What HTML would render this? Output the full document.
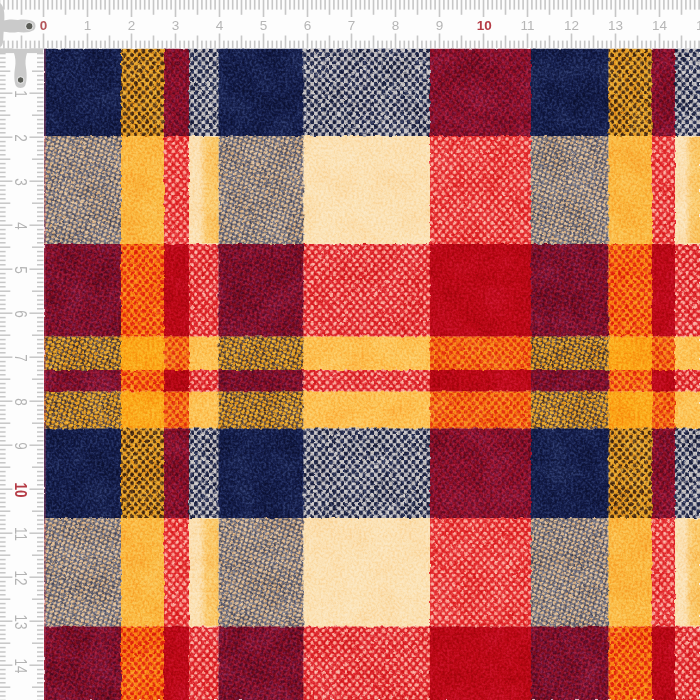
<!DOCTYPE html>
<html><head><meta charset="utf-8"><title>Plaid fabric</title>
<style>
html,body{margin:0;padding:0;background:#fff;}
body{width:700px;height:700px;overflow:hidden;font-family:"Liberation Sans",sans-serif;}
svg{display:block;font-family:"Liberation Sans",sans-serif;}
</style></head><body>
<svg width="700" height="700" viewBox="0 0 700 700">
<defs>
<pattern id="pYN" x="44.0" y="48.5" width="7.5" height="8.4" patternUnits="userSpaceOnUse"><rect width="7.5" height="8.4" fill="#e8a326"/><rect x="0.02499999999999991" y="0.10000000000000009" width="3.7" height="4.0" rx="1.5" fill="#4c2c12"/><rect x="3.775" y="4.300000000000001" width="3.7" height="4.0" rx="1.5" fill="#4c2c12"/></pattern>
<pattern id="pRN" x="44.0" y="48.5" width="7.5" height="8.4" patternUnits="userSpaceOnUse"><rect width="7.5" height="8.4" fill="#981028"/><rect x="-0.07499999999999996" y="-0.04999999999999982" width="3.9" height="4.3" rx="1.5" fill="#72102e"/><rect x="3.675" y="4.15" width="3.9" height="4.3" rx="1.5" fill="#72102e"/></pattern>
<pattern id="pCN" x="44.0" y="48.5" width="7.5" height="8.4" patternUnits="userSpaceOnUse"><rect width="7.5" height="8.4" fill="#c8c4c4"/><rect x="-0.20000000000000018" y="-0.19999999999999973" width="4.15" height="4.6" rx="1.5" fill="#20274a"/><rect x="3.55" y="4.000000000000001" width="4.15" height="4.6" rx="1.5" fill="#20274a"/></pattern>
<pattern id="pNC" width="7.5" height="8.4" patternUnits="userSpaceOnUse" patternTransform="rotate(-25) scale(0.8)"><rect width="7.5" height="8.4" fill="#5f6174"/><ellipse cx="1.875" cy="2.1" rx="2.9" ry="1.7" fill="#e0bc92"/><ellipse cx="5.625" cy="6.300000000000001" rx="2.9" ry="1.7" fill="#e0bc92"/></pattern>
<pattern id="pRC" x="44.0" y="48.5" width="7.5" height="8.4" patternUnits="userSpaceOnUse"><rect width="7.5" height="8.4" fill="#e3282b"/><rect x="0.2250000000000001" y="0.25" width="3.3" height="3.7" rx="1.5" fill="#fbaa9c"/><rect x="3.975" y="4.450000000000001" width="3.3" height="3.7" rx="1.5" fill="#fbaa9c"/></pattern>
<pattern id="pNR" width="7.5" height="8.4" patternUnits="userSpaceOnUse" patternTransform="rotate(-25) scale(1)"><rect width="7.5" height="8.4" fill="#8c0f26"/><ellipse cx="1.875" cy="2.1" rx="2.9" ry="1.7" fill="#681030"/><ellipse cx="5.625" cy="6.300000000000001" rx="2.9" ry="1.7" fill="#681030"/></pattern>
<pattern id="pYR" x="44.0" y="48.5" width="7.5" height="8.4" patternUnits="userSpaceOnUse"><rect width="7.5" height="8.4" fill="#fa8814"/><rect x="-0.07499999999999996" y="-0.04999999999999982" width="3.9" height="4.3" rx="1.5" fill="#e62a0f"/><rect x="3.675" y="4.15" width="3.9" height="4.3" rx="1.5" fill="#e62a0f"/></pattern>
<pattern id="pCR" x="44.0" y="48.5" width="7.5" height="8.4" patternUnits="userSpaceOnUse"><rect width="7.5" height="8.4" fill="#de2228"/><rect x="0.2250000000000001" y="0.25" width="3.3" height="3.7" rx="1.5" fill="#fbac9e"/><rect x="3.975" y="4.450000000000001" width="3.3" height="3.7" rx="1.5" fill="#fbac9e"/></pattern>
<pattern id="pNY" width="7.5" height="8.4" patternUnits="userSpaceOnUse" patternTransform="rotate(-25) scale(0.8)"><rect width="7.5" height="8.4" fill="#54403a"/><ellipse cx="1.875" cy="2.1" rx="3.3" ry="1.95" fill="#eba624"/><ellipse cx="5.625" cy="6.300000000000001" rx="3.3" ry="1.95" fill="#eba624"/></pattern>
<pattern id="pRY" x="44.0" y="48.5" width="7.5" height="8.4" patternUnits="userSpaceOnUse"><rect width="7.5" height="8.4" fill="#f88616"/><rect x="-0.07499999999999996" y="-0.04999999999999982" width="3.9" height="4.3" rx="1.5" fill="#e63610"/><rect x="3.675" y="4.15" width="3.9" height="4.3" rx="1.5" fill="#e63610"/></pattern>
<linearGradient id="yg" x1="0" x2="1" y1="0" y2="0"><stop offset="0" stop-color="#fac45a" stop-opacity="0"/><stop offset="0.4" stop-color="#fac45a" stop-opacity="0.75"/><stop offset="1" stop-color="#fac45a" stop-opacity="0.9"/></linearGradient>
<filter id="grain" x="0" y="0" width="100%" height="100%" color-interpolation-filters="sRGB">
<feTurbulence type="fractalNoise" baseFrequency="0.42" numOctaves="2" seed="3"/>
<feColorMatrix type="matrix" values="2.2 0 0 0 -0.6  2.2 0 0 0 -0.6  2.2 0 0 0 -0.6  0 0 0 0 1"/>
</filter>
<filter id="mott" x="0" y="0" width="100%" height="100%" color-interpolation-filters="sRGB">
<feTurbulence type="fractalNoise" baseFrequency="0.035" numOctaves="2" seed="7"/>
<feColorMatrix type="matrix" values="1.6 0 0 0 -0.3  1.6 0 0 0 -0.3  1.6 0 0 0 -0.3  0 0 0 0 1"/>
</filter>
<filter id="soft" x="0" y="0" width="100%" height="100%" color-interpolation-filters="sRGB">
<feTurbulence type="fractalNoise" baseFrequency="0.16" numOctaves="2" seed="5" result="t"/>
<feDisplacementMap in="SourceGraphic" in2="t" scale="3.2" xChannelSelector="R" yChannelSelector="G" result="d"/>
<feGaussianBlur in="d" stdDeviation="0.55"/>
</filter>
</defs>
<rect width="700" height="700" fill="#fdfdfd"/>
<g filter="url(#soft)">
<rect x="44" y="48.5" width="77.3" height="87.8" fill="#151e4c"/>
<rect x="121" y="48.5" width="43.3" height="87.8" fill="url(#pYN)"/>
<rect x="164" y="48.5" width="25.3" height="87.8" fill="url(#pRN)"/>
<rect x="189" y="48.5" width="29.8" height="87.8" fill="url(#pCN)"/>
<rect x="218.5" y="48.5" width="85.3" height="87.8" fill="#151e4c"/>
<rect x="303.5" y="48.5" width="126.8" height="87.8" fill="url(#pCN)"/>
<rect x="430" y="48.5" width="101.3" height="87.8" fill="url(#pRN)"/>
<rect x="531" y="48.5" width="77.8" height="87.8" fill="#151e4c"/>
<rect x="608.5" y="48.5" width="43.8" height="87.8" fill="url(#pYN)"/>
<rect x="652" y="48.5" width="23.3" height="87.8" fill="url(#pRN)"/>
<rect x="675" y="48.5" width="25.3" height="87.8" fill="url(#pCN)"/>
<rect x="44" y="136" width="77.3" height="108.3" fill="url(#pNC)"/>
<rect x="121" y="136" width="43.3" height="108.3" fill="#fab940"/>
<rect x="164" y="136" width="25.3" height="108.3" fill="url(#pRC)"/>
<rect x="189" y="136" width="29.8" height="108.3" fill="#fbe1b3"/>
<rect x="218.5" y="136" width="85.3" height="108.3" fill="url(#pNC)"/>
<rect x="303.5" y="136" width="126.8" height="108.3" fill="#fbe1b3"/>
<rect x="430" y="136" width="101.3" height="108.3" fill="url(#pRC)"/>
<rect x="531" y="136" width="77.8" height="108.3" fill="url(#pNC)"/>
<rect x="608.5" y="136" width="43.8" height="108.3" fill="#fab940"/>
<rect x="652" y="136" width="23.3" height="108.3" fill="url(#pRC)"/>
<rect x="675" y="136" width="25.3" height="108.3" fill="#fbe1b3"/>
<rect x="44" y="244" width="77.3" height="92.8" fill="url(#pNR)"/>
<rect x="121" y="244" width="43.3" height="92.8" fill="url(#pYR)"/>
<rect x="164" y="244" width="25.3" height="92.8" fill="#bc0815"/>
<rect x="189" y="244" width="29.8" height="92.8" fill="url(#pCR)"/>
<rect x="218.5" y="244" width="85.3" height="92.8" fill="url(#pNR)"/>
<rect x="303.5" y="244" width="126.8" height="92.8" fill="url(#pCR)"/>
<rect x="430" y="244" width="101.3" height="92.8" fill="#bc0815"/>
<rect x="531" y="244" width="77.8" height="92.8" fill="url(#pNR)"/>
<rect x="608.5" y="244" width="43.8" height="92.8" fill="url(#pYR)"/>
<rect x="652" y="244" width="23.3" height="92.8" fill="#bc0815"/>
<rect x="675" y="244" width="25.3" height="92.8" fill="url(#pCR)"/>
<rect x="44" y="336.5" width="77.3" height="33.8" fill="url(#pNY)"/>
<rect x="121" y="336.5" width="43.3" height="33.8" fill="#fba818"/>
<rect x="164" y="336.5" width="25.3" height="33.8" fill="url(#pRY)"/>
<rect x="189" y="336.5" width="29.8" height="33.8" fill="#fcc252"/>
<rect x="218.5" y="336.5" width="85.3" height="33.8" fill="url(#pNY)"/>
<rect x="303.5" y="336.5" width="126.8" height="33.8" fill="#fcc252"/>
<rect x="430" y="336.5" width="101.3" height="33.8" fill="url(#pRY)"/>
<rect x="531" y="336.5" width="77.8" height="33.8" fill="url(#pNY)"/>
<rect x="608.5" y="336.5" width="43.8" height="33.8" fill="#fba818"/>
<rect x="652" y="336.5" width="23.3" height="33.8" fill="url(#pRY)"/>
<rect x="675" y="336.5" width="25.3" height="33.8" fill="#fcc252"/>
<rect x="44" y="370" width="77.3" height="21.8" fill="url(#pNR)"/>
<rect x="121" y="370" width="43.3" height="21.8" fill="url(#pYR)"/>
<rect x="164" y="370" width="25.3" height="21.8" fill="#bc0815"/>
<rect x="189" y="370" width="29.8" height="21.8" fill="url(#pCR)"/>
<rect x="218.5" y="370" width="85.3" height="21.8" fill="url(#pNR)"/>
<rect x="303.5" y="370" width="126.8" height="21.8" fill="url(#pCR)"/>
<rect x="430" y="370" width="101.3" height="21.8" fill="#bc0815"/>
<rect x="531" y="370" width="77.8" height="21.8" fill="url(#pNR)"/>
<rect x="608.5" y="370" width="43.8" height="21.8" fill="url(#pYR)"/>
<rect x="652" y="370" width="23.3" height="21.8" fill="#bc0815"/>
<rect x="675" y="370" width="25.3" height="21.8" fill="url(#pCR)"/>
<rect x="44" y="391.5" width="77.3" height="37.3" fill="url(#pNY)"/>
<rect x="121" y="391.5" width="43.3" height="37.3" fill="#fba818"/>
<rect x="164" y="391.5" width="25.3" height="37.3" fill="url(#pRY)"/>
<rect x="189" y="391.5" width="29.8" height="37.3" fill="#fcc252"/>
<rect x="218.5" y="391.5" width="85.3" height="37.3" fill="url(#pNY)"/>
<rect x="303.5" y="391.5" width="126.8" height="37.3" fill="#fcc252"/>
<rect x="430" y="391.5" width="101.3" height="37.3" fill="url(#pRY)"/>
<rect x="531" y="391.5" width="77.8" height="37.3" fill="url(#pNY)"/>
<rect x="608.5" y="391.5" width="43.8" height="37.3" fill="#fba818"/>
<rect x="652" y="391.5" width="23.3" height="37.3" fill="url(#pRY)"/>
<rect x="675" y="391.5" width="25.3" height="37.3" fill="#fcc252"/>
<rect x="44" y="428.5" width="77.3" height="89.8" fill="#151e4c"/>
<rect x="121" y="428.5" width="43.3" height="89.8" fill="url(#pYN)"/>
<rect x="164" y="428.5" width="25.3" height="89.8" fill="url(#pRN)"/>
<rect x="189" y="428.5" width="29.8" height="89.8" fill="url(#pCN)"/>
<rect x="218.5" y="428.5" width="85.3" height="89.8" fill="#151e4c"/>
<rect x="303.5" y="428.5" width="126.8" height="89.8" fill="url(#pCN)"/>
<rect x="430" y="428.5" width="101.3" height="89.8" fill="url(#pRN)"/>
<rect x="531" y="428.5" width="77.8" height="89.8" fill="#151e4c"/>
<rect x="608.5" y="428.5" width="43.8" height="89.8" fill="url(#pYN)"/>
<rect x="652" y="428.5" width="23.3" height="89.8" fill="url(#pRN)"/>
<rect x="675" y="428.5" width="25.3" height="89.8" fill="url(#pCN)"/>
<rect x="44" y="518" width="77.3" height="108.8" fill="url(#pNC)"/>
<rect x="121" y="518" width="43.3" height="108.8" fill="#fab940"/>
<rect x="164" y="518" width="25.3" height="108.8" fill="url(#pRC)"/>
<rect x="189" y="518" width="29.8" height="108.8" fill="#fbe1b3"/>
<rect x="218.5" y="518" width="85.3" height="108.8" fill="url(#pNC)"/>
<rect x="303.5" y="518" width="126.8" height="108.8" fill="#fbe1b3"/>
<rect x="430" y="518" width="101.3" height="108.8" fill="url(#pRC)"/>
<rect x="531" y="518" width="77.8" height="108.8" fill="url(#pNC)"/>
<rect x="608.5" y="518" width="43.8" height="108.8" fill="#fab940"/>
<rect x="652" y="518" width="23.3" height="108.8" fill="url(#pRC)"/>
<rect x="675" y="518" width="25.3" height="108.8" fill="#fbe1b3"/>
<rect x="44" y="626.5" width="77.3" height="73.8" fill="url(#pNR)"/>
<rect x="121" y="626.5" width="43.3" height="73.8" fill="url(#pYR)"/>
<rect x="164" y="626.5" width="25.3" height="73.8" fill="#bc0815"/>
<rect x="189" y="626.5" width="29.8" height="73.8" fill="url(#pCR)"/>
<rect x="218.5" y="626.5" width="85.3" height="73.8" fill="url(#pNR)"/>
<rect x="303.5" y="626.5" width="126.8" height="73.8" fill="url(#pCR)"/>
<rect x="430" y="626.5" width="101.3" height="73.8" fill="#bc0815"/>
<rect x="531" y="626.5" width="77.8" height="73.8" fill="url(#pNR)"/>
<rect x="608.5" y="626.5" width="43.8" height="73.8" fill="url(#pYR)"/>
<rect x="652" y="626.5" width="23.3" height="73.8" fill="#bc0815"/>
<rect x="675" y="626.5" width="25.3" height="73.8" fill="url(#pCR)"/>
<rect x="199" y="137" width="19.5" height="106" fill="url(#yg)"/>
<rect x="685" y="137" width="15" height="106" fill="url(#yg)"/>
<rect x="199" y="519" width="19.5" height="106.5" fill="url(#yg)"/>
<rect x="685" y="519" width="15" height="106.5" fill="url(#yg)"/>
</g>
<rect x="44.0" y="48.5" width="656.0" height="651.5" filter="url(#grain)" style="mix-blend-mode:soft-light" opacity="0.42"/>
<rect x="44.0" y="48.5" width="656.0" height="651.5" filter="url(#mott)" style="mix-blend-mode:soft-light" opacity="0.2"/>
<rect x="44" y="48.5" width="1.8" height="652" fill="#d04868" opacity="0.35"/>
<!-- rulers -->
<rect x="0" y="0" width="700" height="48.5" fill="#fdfdfd"/>
<rect x="0" y="48.5" width="44" height="652" fill="#fdfdfd"/>
<g fill="#c7c7c7"><rect x="-1.30" y="0" width="1.6" height="17"/><rect x="-1.30" y="33.5" width="1.6" height="15.0"/><rect x="3.10" y="0" width="1.6" height="9.6"/><rect x="3.10" y="40.6" width="1.6" height="7.899999999999999"/><rect x="7.50" y="0" width="1.6" height="9.6"/><rect x="7.50" y="40.6" width="1.6" height="7.899999999999999"/><rect x="11.90" y="0" width="1.6" height="9.6"/><rect x="11.90" y="40.6" width="1.6" height="7.899999999999999"/><rect x="16.30" y="0" width="1.6" height="9.6"/><rect x="16.30" y="40.6" width="1.6" height="7.899999999999999"/><rect x="20.70" y="0" width="1.6" height="14.8"/><rect x="20.70" y="35.5" width="1.6" height="13.0"/><rect x="25.10" y="0" width="1.6" height="9.6"/><rect x="25.10" y="40.6" width="1.6" height="7.899999999999999"/><rect x="29.50" y="0" width="1.6" height="9.6"/><rect x="29.50" y="40.6" width="1.6" height="7.899999999999999"/><rect x="33.90" y="0" width="1.6" height="9.6"/><rect x="33.90" y="40.6" width="1.6" height="7.899999999999999"/><rect x="38.30" y="0" width="1.6" height="9.6"/><rect x="38.30" y="40.6" width="1.6" height="7.899999999999999"/><rect x="42.70" y="0" width="1.6" height="17"/><rect x="42.70" y="33.5" width="1.6" height="15.0"/><rect x="47.10" y="0" width="1.6" height="9.6"/><rect x="47.10" y="40.6" width="1.6" height="7.899999999999999"/><rect x="51.50" y="0" width="1.6" height="9.6"/><rect x="51.50" y="40.6" width="1.6" height="7.899999999999999"/><rect x="55.90" y="0" width="1.6" height="9.6"/><rect x="55.90" y="40.6" width="1.6" height="7.899999999999999"/><rect x="60.30" y="0" width="1.6" height="9.6"/><rect x="60.30" y="40.6" width="1.6" height="7.899999999999999"/><rect x="64.70" y="0" width="1.6" height="14.8"/><rect x="64.70" y="35.5" width="1.6" height="13.0"/><rect x="69.10" y="0" width="1.6" height="9.6"/><rect x="69.10" y="40.6" width="1.6" height="7.899999999999999"/><rect x="73.50" y="0" width="1.6" height="9.6"/><rect x="73.50" y="40.6" width="1.6" height="7.899999999999999"/><rect x="77.90" y="0" width="1.6" height="9.6"/><rect x="77.90" y="40.6" width="1.6" height="7.899999999999999"/><rect x="82.30" y="0" width="1.6" height="9.6"/><rect x="82.30" y="40.6" width="1.6" height="7.899999999999999"/><rect x="86.70" y="0" width="1.6" height="17"/><rect x="86.70" y="33.5" width="1.6" height="15.0"/><rect x="91.10" y="0" width="1.6" height="9.6"/><rect x="91.10" y="40.6" width="1.6" height="7.899999999999999"/><rect x="95.50" y="0" width="1.6" height="9.6"/><rect x="95.50" y="40.6" width="1.6" height="7.899999999999999"/><rect x="99.90" y="0" width="1.6" height="9.6"/><rect x="99.90" y="40.6" width="1.6" height="7.899999999999999"/><rect x="104.30" y="0" width="1.6" height="9.6"/><rect x="104.30" y="40.6" width="1.6" height="7.899999999999999"/><rect x="108.70" y="0" width="1.6" height="14.8"/><rect x="108.70" y="35.5" width="1.6" height="13.0"/><rect x="113.10" y="0" width="1.6" height="9.6"/><rect x="113.10" y="40.6" width="1.6" height="7.899999999999999"/><rect x="117.50" y="0" width="1.6" height="9.6"/><rect x="117.50" y="40.6" width="1.6" height="7.899999999999999"/><rect x="121.90" y="0" width="1.6" height="9.6"/><rect x="121.90" y="40.6" width="1.6" height="7.899999999999999"/><rect x="126.30" y="0" width="1.6" height="9.6"/><rect x="126.30" y="40.6" width="1.6" height="7.899999999999999"/><rect x="130.70" y="0" width="1.6" height="17"/><rect x="130.70" y="33.5" width="1.6" height="15.0"/><rect x="135.10" y="0" width="1.6" height="9.6"/><rect x="135.10" y="40.6" width="1.6" height="7.899999999999999"/><rect x="139.50" y="0" width="1.6" height="9.6"/><rect x="139.50" y="40.6" width="1.6" height="7.899999999999999"/><rect x="143.90" y="0" width="1.6" height="9.6"/><rect x="143.90" y="40.6" width="1.6" height="7.899999999999999"/><rect x="148.30" y="0" width="1.6" height="9.6"/><rect x="148.30" y="40.6" width="1.6" height="7.899999999999999"/><rect x="152.70" y="0" width="1.6" height="14.8"/><rect x="152.70" y="35.5" width="1.6" height="13.0"/><rect x="157.10" y="0" width="1.6" height="9.6"/><rect x="157.10" y="40.6" width="1.6" height="7.899999999999999"/><rect x="161.50" y="0" width="1.6" height="9.6"/><rect x="161.50" y="40.6" width="1.6" height="7.899999999999999"/><rect x="165.90" y="0" width="1.6" height="9.6"/><rect x="165.90" y="40.6" width="1.6" height="7.899999999999999"/><rect x="170.30" y="0" width="1.6" height="9.6"/><rect x="170.30" y="40.6" width="1.6" height="7.899999999999999"/><rect x="174.70" y="0" width="1.6" height="17"/><rect x="174.70" y="33.5" width="1.6" height="15.0"/><rect x="179.10" y="0" width="1.6" height="9.6"/><rect x="179.10" y="40.6" width="1.6" height="7.899999999999999"/><rect x="183.50" y="0" width="1.6" height="9.6"/><rect x="183.50" y="40.6" width="1.6" height="7.899999999999999"/><rect x="187.90" y="0" width="1.6" height="9.6"/><rect x="187.90" y="40.6" width="1.6" height="7.899999999999999"/><rect x="192.30" y="0" width="1.6" height="9.6"/><rect x="192.30" y="40.6" width="1.6" height="7.899999999999999"/><rect x="196.70" y="0" width="1.6" height="14.8"/><rect x="196.70" y="35.5" width="1.6" height="13.0"/><rect x="201.10" y="0" width="1.6" height="9.6"/><rect x="201.10" y="40.6" width="1.6" height="7.899999999999999"/><rect x="205.50" y="0" width="1.6" height="9.6"/><rect x="205.50" y="40.6" width="1.6" height="7.899999999999999"/><rect x="209.90" y="0" width="1.6" height="9.6"/><rect x="209.90" y="40.6" width="1.6" height="7.899999999999999"/><rect x="214.30" y="0" width="1.6" height="9.6"/><rect x="214.30" y="40.6" width="1.6" height="7.899999999999999"/><rect x="218.70" y="0" width="1.6" height="17"/><rect x="218.70" y="33.5" width="1.6" height="15.0"/><rect x="223.10" y="0" width="1.6" height="9.6"/><rect x="223.10" y="40.6" width="1.6" height="7.899999999999999"/><rect x="227.50" y="0" width="1.6" height="9.6"/><rect x="227.50" y="40.6" width="1.6" height="7.899999999999999"/><rect x="231.90" y="0" width="1.6" height="9.6"/><rect x="231.90" y="40.6" width="1.6" height="7.899999999999999"/><rect x="236.30" y="0" width="1.6" height="9.6"/><rect x="236.30" y="40.6" width="1.6" height="7.899999999999999"/><rect x="240.70" y="0" width="1.6" height="14.8"/><rect x="240.70" y="35.5" width="1.6" height="13.0"/><rect x="245.10" y="0" width="1.6" height="9.6"/><rect x="245.10" y="40.6" width="1.6" height="7.899999999999999"/><rect x="249.50" y="0" width="1.6" height="9.6"/><rect x="249.50" y="40.6" width="1.6" height="7.899999999999999"/><rect x="253.90" y="0" width="1.6" height="9.6"/><rect x="253.90" y="40.6" width="1.6" height="7.899999999999999"/><rect x="258.30" y="0" width="1.6" height="9.6"/><rect x="258.30" y="40.6" width="1.6" height="7.899999999999999"/><rect x="262.70" y="0" width="1.6" height="17"/><rect x="262.70" y="33.5" width="1.6" height="15.0"/><rect x="267.10" y="0" width="1.6" height="9.6"/><rect x="267.10" y="40.6" width="1.6" height="7.899999999999999"/><rect x="271.50" y="0" width="1.6" height="9.6"/><rect x="271.50" y="40.6" width="1.6" height="7.899999999999999"/><rect x="275.90" y="0" width="1.6" height="9.6"/><rect x="275.90" y="40.6" width="1.6" height="7.899999999999999"/><rect x="280.30" y="0" width="1.6" height="9.6"/><rect x="280.30" y="40.6" width="1.6" height="7.899999999999999"/><rect x="284.70" y="0" width="1.6" height="14.8"/><rect x="284.70" y="35.5" width="1.6" height="13.0"/><rect x="289.10" y="0" width="1.6" height="9.6"/><rect x="289.10" y="40.6" width="1.6" height="7.899999999999999"/><rect x="293.50" y="0" width="1.6" height="9.6"/><rect x="293.50" y="40.6" width="1.6" height="7.899999999999999"/><rect x="297.90" y="0" width="1.6" height="9.6"/><rect x="297.90" y="40.6" width="1.6" height="7.899999999999999"/><rect x="302.30" y="0" width="1.6" height="9.6"/><rect x="302.30" y="40.6" width="1.6" height="7.899999999999999"/><rect x="306.70" y="0" width="1.6" height="17"/><rect x="306.70" y="33.5" width="1.6" height="15.0"/><rect x="311.10" y="0" width="1.6" height="9.6"/><rect x="311.10" y="40.6" width="1.6" height="7.899999999999999"/><rect x="315.50" y="0" width="1.6" height="9.6"/><rect x="315.50" y="40.6" width="1.6" height="7.899999999999999"/><rect x="319.90" y="0" width="1.6" height="9.6"/><rect x="319.90" y="40.6" width="1.6" height="7.899999999999999"/><rect x="324.30" y="0" width="1.6" height="9.6"/><rect x="324.30" y="40.6" width="1.6" height="7.899999999999999"/><rect x="328.70" y="0" width="1.6" height="14.8"/><rect x="328.70" y="35.5" width="1.6" height="13.0"/><rect x="333.10" y="0" width="1.6" height="9.6"/><rect x="333.10" y="40.6" width="1.6" height="7.899999999999999"/><rect x="337.50" y="0" width="1.6" height="9.6"/><rect x="337.50" y="40.6" width="1.6" height="7.899999999999999"/><rect x="341.90" y="0" width="1.6" height="9.6"/><rect x="341.90" y="40.6" width="1.6" height="7.899999999999999"/><rect x="346.30" y="0" width="1.6" height="9.6"/><rect x="346.30" y="40.6" width="1.6" height="7.899999999999999"/><rect x="350.70" y="0" width="1.6" height="17"/><rect x="350.70" y="33.5" width="1.6" height="15.0"/><rect x="355.10" y="0" width="1.6" height="9.6"/><rect x="355.10" y="40.6" width="1.6" height="7.899999999999999"/><rect x="359.50" y="0" width="1.6" height="9.6"/><rect x="359.50" y="40.6" width="1.6" height="7.899999999999999"/><rect x="363.90" y="0" width="1.6" height="9.6"/><rect x="363.90" y="40.6" width="1.6" height="7.899999999999999"/><rect x="368.30" y="0" width="1.6" height="9.6"/><rect x="368.30" y="40.6" width="1.6" height="7.899999999999999"/><rect x="372.70" y="0" width="1.6" height="14.8"/><rect x="372.70" y="35.5" width="1.6" height="13.0"/><rect x="377.10" y="0" width="1.6" height="9.6"/><rect x="377.10" y="40.6" width="1.6" height="7.899999999999999"/><rect x="381.50" y="0" width="1.6" height="9.6"/><rect x="381.50" y="40.6" width="1.6" height="7.899999999999999"/><rect x="385.90" y="0" width="1.6" height="9.6"/><rect x="385.90" y="40.6" width="1.6" height="7.899999999999999"/><rect x="390.30" y="0" width="1.6" height="9.6"/><rect x="390.30" y="40.6" width="1.6" height="7.899999999999999"/><rect x="394.70" y="0" width="1.6" height="17"/><rect x="394.70" y="33.5" width="1.6" height="15.0"/><rect x="399.10" y="0" width="1.6" height="9.6"/><rect x="399.10" y="40.6" width="1.6" height="7.899999999999999"/><rect x="403.50" y="0" width="1.6" height="9.6"/><rect x="403.50" y="40.6" width="1.6" height="7.899999999999999"/><rect x="407.90" y="0" width="1.6" height="9.6"/><rect x="407.90" y="40.6" width="1.6" height="7.899999999999999"/><rect x="412.30" y="0" width="1.6" height="9.6"/><rect x="412.30" y="40.6" width="1.6" height="7.899999999999999"/><rect x="416.70" y="0" width="1.6" height="14.8"/><rect x="416.70" y="35.5" width="1.6" height="13.0"/><rect x="421.10" y="0" width="1.6" height="9.6"/><rect x="421.10" y="40.6" width="1.6" height="7.899999999999999"/><rect x="425.50" y="0" width="1.6" height="9.6"/><rect x="425.50" y="40.6" width="1.6" height="7.899999999999999"/><rect x="429.90" y="0" width="1.6" height="9.6"/><rect x="429.90" y="40.6" width="1.6" height="7.899999999999999"/><rect x="434.30" y="0" width="1.6" height="9.6"/><rect x="434.30" y="40.6" width="1.6" height="7.899999999999999"/><rect x="438.70" y="0" width="1.6" height="17"/><rect x="438.70" y="33.5" width="1.6" height="15.0"/><rect x="443.10" y="0" width="1.6" height="9.6"/><rect x="443.10" y="40.6" width="1.6" height="7.899999999999999"/><rect x="447.50" y="0" width="1.6" height="9.6"/><rect x="447.50" y="40.6" width="1.6" height="7.899999999999999"/><rect x="451.90" y="0" width="1.6" height="9.6"/><rect x="451.90" y="40.6" width="1.6" height="7.899999999999999"/><rect x="456.30" y="0" width="1.6" height="9.6"/><rect x="456.30" y="40.6" width="1.6" height="7.899999999999999"/><rect x="460.70" y="0" width="1.6" height="14.8"/><rect x="460.70" y="35.5" width="1.6" height="13.0"/><rect x="465.10" y="0" width="1.6" height="9.6"/><rect x="465.10" y="40.6" width="1.6" height="7.899999999999999"/><rect x="469.50" y="0" width="1.6" height="9.6"/><rect x="469.50" y="40.6" width="1.6" height="7.899999999999999"/><rect x="473.90" y="0" width="1.6" height="9.6"/><rect x="473.90" y="40.6" width="1.6" height="7.899999999999999"/><rect x="478.30" y="0" width="1.6" height="9.6"/><rect x="478.30" y="40.6" width="1.6" height="7.899999999999999"/><rect x="482.70" y="0" width="1.6" height="17"/><rect x="482.70" y="33.5" width="1.6" height="15.0"/><rect x="487.10" y="0" width="1.6" height="9.6"/><rect x="487.10" y="40.6" width="1.6" height="7.899999999999999"/><rect x="491.50" y="0" width="1.6" height="9.6"/><rect x="491.50" y="40.6" width="1.6" height="7.899999999999999"/><rect x="495.90" y="0" width="1.6" height="9.6"/><rect x="495.90" y="40.6" width="1.6" height="7.899999999999999"/><rect x="500.30" y="0" width="1.6" height="9.6"/><rect x="500.30" y="40.6" width="1.6" height="7.899999999999999"/><rect x="504.70" y="0" width="1.6" height="14.8"/><rect x="504.70" y="35.5" width="1.6" height="13.0"/><rect x="509.10" y="0" width="1.6" height="9.6"/><rect x="509.10" y="40.6" width="1.6" height="7.899999999999999"/><rect x="513.50" y="0" width="1.6" height="9.6"/><rect x="513.50" y="40.6" width="1.6" height="7.899999999999999"/><rect x="517.90" y="0" width="1.6" height="9.6"/><rect x="517.90" y="40.6" width="1.6" height="7.899999999999999"/><rect x="522.30" y="0" width="1.6" height="9.6"/><rect x="522.30" y="40.6" width="1.6" height="7.899999999999999"/><rect x="526.70" y="0" width="1.6" height="17"/><rect x="526.70" y="33.5" width="1.6" height="15.0"/><rect x="531.10" y="0" width="1.6" height="9.6"/><rect x="531.10" y="40.6" width="1.6" height="7.899999999999999"/><rect x="535.50" y="0" width="1.6" height="9.6"/><rect x="535.50" y="40.6" width="1.6" height="7.899999999999999"/><rect x="539.90" y="0" width="1.6" height="9.6"/><rect x="539.90" y="40.6" width="1.6" height="7.899999999999999"/><rect x="544.30" y="0" width="1.6" height="9.6"/><rect x="544.30" y="40.6" width="1.6" height="7.899999999999999"/><rect x="548.70" y="0" width="1.6" height="14.8"/><rect x="548.70" y="35.5" width="1.6" height="13.0"/><rect x="553.10" y="0" width="1.6" height="9.6"/><rect x="553.10" y="40.6" width="1.6" height="7.899999999999999"/><rect x="557.50" y="0" width="1.6" height="9.6"/><rect x="557.50" y="40.6" width="1.6" height="7.899999999999999"/><rect x="561.90" y="0" width="1.6" height="9.6"/><rect x="561.90" y="40.6" width="1.6" height="7.899999999999999"/><rect x="566.30" y="0" width="1.6" height="9.6"/><rect x="566.30" y="40.6" width="1.6" height="7.899999999999999"/><rect x="570.70" y="0" width="1.6" height="17"/><rect x="570.70" y="33.5" width="1.6" height="15.0"/><rect x="575.10" y="0" width="1.6" height="9.6"/><rect x="575.10" y="40.6" width="1.6" height="7.899999999999999"/><rect x="579.50" y="0" width="1.6" height="9.6"/><rect x="579.50" y="40.6" width="1.6" height="7.899999999999999"/><rect x="583.90" y="0" width="1.6" height="9.6"/><rect x="583.90" y="40.6" width="1.6" height="7.899999999999999"/><rect x="588.30" y="0" width="1.6" height="9.6"/><rect x="588.30" y="40.6" width="1.6" height="7.899999999999999"/><rect x="592.70" y="0" width="1.6" height="14.8"/><rect x="592.70" y="35.5" width="1.6" height="13.0"/><rect x="597.10" y="0" width="1.6" height="9.6"/><rect x="597.10" y="40.6" width="1.6" height="7.899999999999999"/><rect x="601.50" y="0" width="1.6" height="9.6"/><rect x="601.50" y="40.6" width="1.6" height="7.899999999999999"/><rect x="605.90" y="0" width="1.6" height="9.6"/><rect x="605.90" y="40.6" width="1.6" height="7.899999999999999"/><rect x="610.30" y="0" width="1.6" height="9.6"/><rect x="610.30" y="40.6" width="1.6" height="7.899999999999999"/><rect x="614.70" y="0" width="1.6" height="17"/><rect x="614.70" y="33.5" width="1.6" height="15.0"/><rect x="619.10" y="0" width="1.6" height="9.6"/><rect x="619.10" y="40.6" width="1.6" height="7.899999999999999"/><rect x="623.50" y="0" width="1.6" height="9.6"/><rect x="623.50" y="40.6" width="1.6" height="7.899999999999999"/><rect x="627.90" y="0" width="1.6" height="9.6"/><rect x="627.90" y="40.6" width="1.6" height="7.899999999999999"/><rect x="632.30" y="0" width="1.6" height="9.6"/><rect x="632.30" y="40.6" width="1.6" height="7.899999999999999"/><rect x="636.70" y="0" width="1.6" height="14.8"/><rect x="636.70" y="35.5" width="1.6" height="13.0"/><rect x="641.10" y="0" width="1.6" height="9.6"/><rect x="641.10" y="40.6" width="1.6" height="7.899999999999999"/><rect x="645.50" y="0" width="1.6" height="9.6"/><rect x="645.50" y="40.6" width="1.6" height="7.899999999999999"/><rect x="649.90" y="0" width="1.6" height="9.6"/><rect x="649.90" y="40.6" width="1.6" height="7.899999999999999"/><rect x="654.30" y="0" width="1.6" height="9.6"/><rect x="654.30" y="40.6" width="1.6" height="7.899999999999999"/><rect x="658.70" y="0" width="1.6" height="17"/><rect x="658.70" y="33.5" width="1.6" height="15.0"/><rect x="663.10" y="0" width="1.6" height="9.6"/><rect x="663.10" y="40.6" width="1.6" height="7.899999999999999"/><rect x="667.50" y="0" width="1.6" height="9.6"/><rect x="667.50" y="40.6" width="1.6" height="7.899999999999999"/><rect x="671.90" y="0" width="1.6" height="9.6"/><rect x="671.90" y="40.6" width="1.6" height="7.899999999999999"/><rect x="676.30" y="0" width="1.6" height="9.6"/><rect x="676.30" y="40.6" width="1.6" height="7.899999999999999"/><rect x="680.70" y="0" width="1.6" height="14.8"/><rect x="680.70" y="35.5" width="1.6" height="13.0"/><rect x="685.10" y="0" width="1.6" height="9.6"/><rect x="685.10" y="40.6" width="1.6" height="7.899999999999999"/><rect x="689.50" y="0" width="1.6" height="9.6"/><rect x="689.50" y="40.6" width="1.6" height="7.899999999999999"/><rect x="693.90" y="0" width="1.6" height="9.6"/><rect x="693.90" y="40.6" width="1.6" height="7.899999999999999"/><rect x="698.30" y="0" width="1.6" height="9.6"/><rect x="698.30" y="40.6" width="1.6" height="7.899999999999999"/></g>
<g fill="#c7c7c7"><rect x="0" y="48.45" width="12.4" height="1.5"/><rect x="29.5" y="48.45" width="14.0" height="1.5"/><rect x="0" y="52.85" width="5.6" height="1.5"/><rect x="37" y="52.85" width="6.5" height="1.5"/><rect x="0" y="57.25" width="5.6" height="1.5"/><rect x="37" y="57.25" width="6.5" height="1.5"/><rect x="0" y="61.65" width="5.6" height="1.5"/><rect x="37" y="61.65" width="6.5" height="1.5"/><rect x="0" y="66.05" width="5.6" height="1.5"/><rect x="37" y="66.05" width="6.5" height="1.5"/><rect x="0" y="70.45" width="10.3" height="1.5"/><rect x="32" y="70.45" width="11.5" height="1.5"/><rect x="0" y="74.85" width="5.6" height="1.5"/><rect x="37" y="74.85" width="6.5" height="1.5"/><rect x="0" y="79.25" width="5.6" height="1.5"/><rect x="37" y="79.25" width="6.5" height="1.5"/><rect x="0" y="83.65" width="5.6" height="1.5"/><rect x="37" y="83.65" width="6.5" height="1.5"/><rect x="0" y="88.05" width="5.6" height="1.5"/><rect x="37" y="88.05" width="6.5" height="1.5"/><rect x="0" y="92.45" width="12.4" height="1.5"/><rect x="29.5" y="92.45" width="14.0" height="1.5"/><rect x="0" y="96.85" width="5.6" height="1.5"/><rect x="37" y="96.85" width="6.5" height="1.5"/><rect x="0" y="101.25" width="5.6" height="1.5"/><rect x="37" y="101.25" width="6.5" height="1.5"/><rect x="0" y="105.65" width="5.6" height="1.5"/><rect x="37" y="105.65" width="6.5" height="1.5"/><rect x="0" y="110.05" width="5.6" height="1.5"/><rect x="37" y="110.05" width="6.5" height="1.5"/><rect x="0" y="114.45" width="10.3" height="1.5"/><rect x="32" y="114.45" width="11.5" height="1.5"/><rect x="0" y="118.85" width="5.6" height="1.5"/><rect x="37" y="118.85" width="6.5" height="1.5"/><rect x="0" y="123.25" width="5.6" height="1.5"/><rect x="37" y="123.25" width="6.5" height="1.5"/><rect x="0" y="127.65" width="5.6" height="1.5"/><rect x="37" y="127.65" width="6.5" height="1.5"/><rect x="0" y="132.05" width="5.6" height="1.5"/><rect x="37" y="132.05" width="6.5" height="1.5"/><rect x="0" y="136.45" width="12.4" height="1.5"/><rect x="29.5" y="136.45" width="14.0" height="1.5"/><rect x="0" y="140.85" width="5.6" height="1.5"/><rect x="37" y="140.85" width="6.5" height="1.5"/><rect x="0" y="145.25" width="5.6" height="1.5"/><rect x="37" y="145.25" width="6.5" height="1.5"/><rect x="0" y="149.65" width="5.6" height="1.5"/><rect x="37" y="149.65" width="6.5" height="1.5"/><rect x="0" y="154.05" width="5.6" height="1.5"/><rect x="37" y="154.05" width="6.5" height="1.5"/><rect x="0" y="158.45" width="10.3" height="1.5"/><rect x="32" y="158.45" width="11.5" height="1.5"/><rect x="0" y="162.85" width="5.6" height="1.5"/><rect x="37" y="162.85" width="6.5" height="1.5"/><rect x="0" y="167.25" width="5.6" height="1.5"/><rect x="37" y="167.25" width="6.5" height="1.5"/><rect x="0" y="171.65" width="5.6" height="1.5"/><rect x="37" y="171.65" width="6.5" height="1.5"/><rect x="0" y="176.05" width="5.6" height="1.5"/><rect x="37" y="176.05" width="6.5" height="1.5"/><rect x="0" y="180.45" width="12.4" height="1.5"/><rect x="29.5" y="180.45" width="14.0" height="1.5"/><rect x="0" y="184.85" width="5.6" height="1.5"/><rect x="37" y="184.85" width="6.5" height="1.5"/><rect x="0" y="189.25" width="5.6" height="1.5"/><rect x="37" y="189.25" width="6.5" height="1.5"/><rect x="0" y="193.65" width="5.6" height="1.5"/><rect x="37" y="193.65" width="6.5" height="1.5"/><rect x="0" y="198.05" width="5.6" height="1.5"/><rect x="37" y="198.05" width="6.5" height="1.5"/><rect x="0" y="202.45" width="10.3" height="1.5"/><rect x="32" y="202.45" width="11.5" height="1.5"/><rect x="0" y="206.85" width="5.6" height="1.5"/><rect x="37" y="206.85" width="6.5" height="1.5"/><rect x="0" y="211.25" width="5.6" height="1.5"/><rect x="37" y="211.25" width="6.5" height="1.5"/><rect x="0" y="215.65" width="5.6" height="1.5"/><rect x="37" y="215.65" width="6.5" height="1.5"/><rect x="0" y="220.05" width="5.6" height="1.5"/><rect x="37" y="220.05" width="6.5" height="1.5"/><rect x="0" y="224.45" width="12.4" height="1.5"/><rect x="29.5" y="224.45" width="14.0" height="1.5"/><rect x="0" y="228.85" width="5.6" height="1.5"/><rect x="37" y="228.85" width="6.5" height="1.5"/><rect x="0" y="233.25" width="5.6" height="1.5"/><rect x="37" y="233.25" width="6.5" height="1.5"/><rect x="0" y="237.65" width="5.6" height="1.5"/><rect x="37" y="237.65" width="6.5" height="1.5"/><rect x="0" y="242.05" width="5.6" height="1.5"/><rect x="37" y="242.05" width="6.5" height="1.5"/><rect x="0" y="246.45" width="10.3" height="1.5"/><rect x="32" y="246.45" width="11.5" height="1.5"/><rect x="0" y="250.85" width="5.6" height="1.5"/><rect x="37" y="250.85" width="6.5" height="1.5"/><rect x="0" y="255.25" width="5.6" height="1.5"/><rect x="37" y="255.25" width="6.5" height="1.5"/><rect x="0" y="259.65" width="5.6" height="1.5"/><rect x="37" y="259.65" width="6.5" height="1.5"/><rect x="0" y="264.05" width="5.6" height="1.5"/><rect x="37" y="264.05" width="6.5" height="1.5"/><rect x="0" y="268.45" width="12.4" height="1.5"/><rect x="29.5" y="268.45" width="14.0" height="1.5"/><rect x="0" y="272.85" width="5.6" height="1.5"/><rect x="37" y="272.85" width="6.5" height="1.5"/><rect x="0" y="277.25" width="5.6" height="1.5"/><rect x="37" y="277.25" width="6.5" height="1.5"/><rect x="0" y="281.65" width="5.6" height="1.5"/><rect x="37" y="281.65" width="6.5" height="1.5"/><rect x="0" y="286.05" width="5.6" height="1.5"/><rect x="37" y="286.05" width="6.5" height="1.5"/><rect x="0" y="290.45" width="10.3" height="1.5"/><rect x="32" y="290.45" width="11.5" height="1.5"/><rect x="0" y="294.85" width="5.6" height="1.5"/><rect x="37" y="294.85" width="6.5" height="1.5"/><rect x="0" y="299.25" width="5.6" height="1.5"/><rect x="37" y="299.25" width="6.5" height="1.5"/><rect x="0" y="303.65" width="5.6" height="1.5"/><rect x="37" y="303.65" width="6.5" height="1.5"/><rect x="0" y="308.05" width="5.6" height="1.5"/><rect x="37" y="308.05" width="6.5" height="1.5"/><rect x="0" y="312.45" width="12.4" height="1.5"/><rect x="29.5" y="312.45" width="14.0" height="1.5"/><rect x="0" y="316.85" width="5.6" height="1.5"/><rect x="37" y="316.85" width="6.5" height="1.5"/><rect x="0" y="321.25" width="5.6" height="1.5"/><rect x="37" y="321.25" width="6.5" height="1.5"/><rect x="0" y="325.65" width="5.6" height="1.5"/><rect x="37" y="325.65" width="6.5" height="1.5"/><rect x="0" y="330.05" width="5.6" height="1.5"/><rect x="37" y="330.05" width="6.5" height="1.5"/><rect x="0" y="334.45" width="10.3" height="1.5"/><rect x="32" y="334.45" width="11.5" height="1.5"/><rect x="0" y="338.85" width="5.6" height="1.5"/><rect x="37" y="338.85" width="6.5" height="1.5"/><rect x="0" y="343.25" width="5.6" height="1.5"/><rect x="37" y="343.25" width="6.5" height="1.5"/><rect x="0" y="347.65" width="5.6" height="1.5"/><rect x="37" y="347.65" width="6.5" height="1.5"/><rect x="0" y="352.05" width="5.6" height="1.5"/><rect x="37" y="352.05" width="6.5" height="1.5"/><rect x="0" y="356.45" width="12.4" height="1.5"/><rect x="29.5" y="356.45" width="14.0" height="1.5"/><rect x="0" y="360.85" width="5.6" height="1.5"/><rect x="37" y="360.85" width="6.5" height="1.5"/><rect x="0" y="365.25" width="5.6" height="1.5"/><rect x="37" y="365.25" width="6.5" height="1.5"/><rect x="0" y="369.65" width="5.6" height="1.5"/><rect x="37" y="369.65" width="6.5" height="1.5"/><rect x="0" y="374.05" width="5.6" height="1.5"/><rect x="37" y="374.05" width="6.5" height="1.5"/><rect x="0" y="378.45" width="10.3" height="1.5"/><rect x="32" y="378.45" width="11.5" height="1.5"/><rect x="0" y="382.85" width="5.6" height="1.5"/><rect x="37" y="382.85" width="6.5" height="1.5"/><rect x="0" y="387.25" width="5.6" height="1.5"/><rect x="37" y="387.25" width="6.5" height="1.5"/><rect x="0" y="391.65" width="5.6" height="1.5"/><rect x="37" y="391.65" width="6.5" height="1.5"/><rect x="0" y="396.05" width="5.6" height="1.5"/><rect x="37" y="396.05" width="6.5" height="1.5"/><rect x="0" y="400.45" width="12.4" height="1.5"/><rect x="29.5" y="400.45" width="14.0" height="1.5"/><rect x="0" y="404.85" width="5.6" height="1.5"/><rect x="37" y="404.85" width="6.5" height="1.5"/><rect x="0" y="409.25" width="5.6" height="1.5"/><rect x="37" y="409.25" width="6.5" height="1.5"/><rect x="0" y="413.65" width="5.6" height="1.5"/><rect x="37" y="413.65" width="6.5" height="1.5"/><rect x="0" y="418.05" width="5.6" height="1.5"/><rect x="37" y="418.05" width="6.5" height="1.5"/><rect x="0" y="422.45" width="10.3" height="1.5"/><rect x="32" y="422.45" width="11.5" height="1.5"/><rect x="0" y="426.85" width="5.6" height="1.5"/><rect x="37" y="426.85" width="6.5" height="1.5"/><rect x="0" y="431.25" width="5.6" height="1.5"/><rect x="37" y="431.25" width="6.5" height="1.5"/><rect x="0" y="435.65" width="5.6" height="1.5"/><rect x="37" y="435.65" width="6.5" height="1.5"/><rect x="0" y="440.05" width="5.6" height="1.5"/><rect x="37" y="440.05" width="6.5" height="1.5"/><rect x="0" y="444.45" width="12.4" height="1.5"/><rect x="29.5" y="444.45" width="14.0" height="1.5"/><rect x="0" y="448.85" width="5.6" height="1.5"/><rect x="37" y="448.85" width="6.5" height="1.5"/><rect x="0" y="453.25" width="5.6" height="1.5"/><rect x="37" y="453.25" width="6.5" height="1.5"/><rect x="0" y="457.65" width="5.6" height="1.5"/><rect x="37" y="457.65" width="6.5" height="1.5"/><rect x="0" y="462.05" width="5.6" height="1.5"/><rect x="37" y="462.05" width="6.5" height="1.5"/><rect x="0" y="466.45" width="10.3" height="1.5"/><rect x="32" y="466.45" width="11.5" height="1.5"/><rect x="0" y="470.85" width="5.6" height="1.5"/><rect x="37" y="470.85" width="6.5" height="1.5"/><rect x="0" y="475.25" width="5.6" height="1.5"/><rect x="37" y="475.25" width="6.5" height="1.5"/><rect x="0" y="479.65" width="5.6" height="1.5"/><rect x="37" y="479.65" width="6.5" height="1.5"/><rect x="0" y="484.05" width="5.6" height="1.5"/><rect x="37" y="484.05" width="6.5" height="1.5"/><rect x="0" y="488.45" width="12.4" height="1.5"/><rect x="29.5" y="488.45" width="14.0" height="1.5"/><rect x="0" y="492.85" width="5.6" height="1.5"/><rect x="37" y="492.85" width="6.5" height="1.5"/><rect x="0" y="497.25" width="5.6" height="1.5"/><rect x="37" y="497.25" width="6.5" height="1.5"/><rect x="0" y="501.65" width="5.6" height="1.5"/><rect x="37" y="501.65" width="6.5" height="1.5"/><rect x="0" y="506.05" width="5.6" height="1.5"/><rect x="37" y="506.05" width="6.5" height="1.5"/><rect x="0" y="510.45" width="10.3" height="1.5"/><rect x="32" y="510.45" width="11.5" height="1.5"/><rect x="0" y="514.85" width="5.6" height="1.5"/><rect x="37" y="514.85" width="6.5" height="1.5"/><rect x="0" y="519.25" width="5.6" height="1.5"/><rect x="37" y="519.25" width="6.5" height="1.5"/><rect x="0" y="523.65" width="5.6" height="1.5"/><rect x="37" y="523.65" width="6.5" height="1.5"/><rect x="0" y="528.05" width="5.6" height="1.5"/><rect x="37" y="528.05" width="6.5" height="1.5"/><rect x="0" y="532.45" width="12.4" height="1.5"/><rect x="29.5" y="532.45" width="14.0" height="1.5"/><rect x="0" y="536.85" width="5.6" height="1.5"/><rect x="37" y="536.85" width="6.5" height="1.5"/><rect x="0" y="541.25" width="5.6" height="1.5"/><rect x="37" y="541.25" width="6.5" height="1.5"/><rect x="0" y="545.65" width="5.6" height="1.5"/><rect x="37" y="545.65" width="6.5" height="1.5"/><rect x="0" y="550.05" width="5.6" height="1.5"/><rect x="37" y="550.05" width="6.5" height="1.5"/><rect x="0" y="554.45" width="10.3" height="1.5"/><rect x="32" y="554.45" width="11.5" height="1.5"/><rect x="0" y="558.85" width="5.6" height="1.5"/><rect x="37" y="558.85" width="6.5" height="1.5"/><rect x="0" y="563.25" width="5.6" height="1.5"/><rect x="37" y="563.25" width="6.5" height="1.5"/><rect x="0" y="567.65" width="5.6" height="1.5"/><rect x="37" y="567.65" width="6.5" height="1.5"/><rect x="0" y="572.05" width="5.6" height="1.5"/><rect x="37" y="572.05" width="6.5" height="1.5"/><rect x="0" y="576.45" width="12.4" height="1.5"/><rect x="29.5" y="576.45" width="14.0" height="1.5"/><rect x="0" y="580.85" width="5.6" height="1.5"/><rect x="37" y="580.85" width="6.5" height="1.5"/><rect x="0" y="585.25" width="5.6" height="1.5"/><rect x="37" y="585.25" width="6.5" height="1.5"/><rect x="0" y="589.65" width="5.6" height="1.5"/><rect x="37" y="589.65" width="6.5" height="1.5"/><rect x="0" y="594.05" width="5.6" height="1.5"/><rect x="37" y="594.05" width="6.5" height="1.5"/><rect x="0" y="598.45" width="10.3" height="1.5"/><rect x="32" y="598.45" width="11.5" height="1.5"/><rect x="0" y="602.85" width="5.6" height="1.5"/><rect x="37" y="602.85" width="6.5" height="1.5"/><rect x="0" y="607.25" width="5.6" height="1.5"/><rect x="37" y="607.25" width="6.5" height="1.5"/><rect x="0" y="611.65" width="5.6" height="1.5"/><rect x="37" y="611.65" width="6.5" height="1.5"/><rect x="0" y="616.05" width="5.6" height="1.5"/><rect x="37" y="616.05" width="6.5" height="1.5"/><rect x="0" y="620.45" width="12.4" height="1.5"/><rect x="29.5" y="620.45" width="14.0" height="1.5"/><rect x="0" y="624.85" width="5.6" height="1.5"/><rect x="37" y="624.85" width="6.5" height="1.5"/><rect x="0" y="629.25" width="5.6" height="1.5"/><rect x="37" y="629.25" width="6.5" height="1.5"/><rect x="0" y="633.65" width="5.6" height="1.5"/><rect x="37" y="633.65" width="6.5" height="1.5"/><rect x="0" y="638.05" width="5.6" height="1.5"/><rect x="37" y="638.05" width="6.5" height="1.5"/><rect x="0" y="642.45" width="10.3" height="1.5"/><rect x="32" y="642.45" width="11.5" height="1.5"/><rect x="0" y="646.85" width="5.6" height="1.5"/><rect x="37" y="646.85" width="6.5" height="1.5"/><rect x="0" y="651.25" width="5.6" height="1.5"/><rect x="37" y="651.25" width="6.5" height="1.5"/><rect x="0" y="655.65" width="5.6" height="1.5"/><rect x="37" y="655.65" width="6.5" height="1.5"/><rect x="0" y="660.05" width="5.6" height="1.5"/><rect x="37" y="660.05" width="6.5" height="1.5"/><rect x="0" y="664.45" width="12.4" height="1.5"/><rect x="29.5" y="664.45" width="14.0" height="1.5"/><rect x="0" y="668.85" width="5.6" height="1.5"/><rect x="37" y="668.85" width="6.5" height="1.5"/><rect x="0" y="673.25" width="5.6" height="1.5"/><rect x="37" y="673.25" width="6.5" height="1.5"/><rect x="0" y="677.65" width="5.6" height="1.5"/><rect x="37" y="677.65" width="6.5" height="1.5"/><rect x="0" y="682.05" width="5.6" height="1.5"/><rect x="37" y="682.05" width="6.5" height="1.5"/><rect x="0" y="686.45" width="10.3" height="1.5"/><rect x="32" y="686.45" width="11.5" height="1.5"/><rect x="0" y="690.85" width="5.6" height="1.5"/><rect x="37" y="690.85" width="6.5" height="1.5"/><rect x="0" y="695.25" width="5.6" height="1.5"/><rect x="37" y="695.25" width="6.5" height="1.5"/><rect x="0" y="699.65" width="5.6" height="1.5"/><rect x="37" y="699.65" width="6.5" height="1.5"/></g>
<!-- bracket -->
<g fill="#cacaca">
<path d="M0 3 C3 5 4.6 10 4.4 18 C4.2 26 3.4 34 3.2 40 C3.1 44 2 46.5 0 47 Z"/>
<path d="M0 21 C8 19.5 12 19 18 20 C24 19 30 19.5 34 22 C36 24 36 28 34 30 C30 32.5 24 33 18 32 C12 33 8 32.5 0 31 Z"/>
<rect x="0" y="48.8" width="43" height="4.3"/>
<path d="M14 53 L27 53 C25.5 58 25 62 26 68 C27 74 27 82 25 86 C23 88.5 18 88.5 16 86 C14 82 14 74 15 68 C16 62 15.5 58 14 53 Z"/>
</g>
<circle cx="29.3" cy="26.2" r="3.1" fill="#5a5c56"/><circle cx="29.3" cy="26.2" r="3.9" fill="none" stroke="#e0e0e0" stroke-width="1"/>
<circle cx="20.6" cy="80" r="2.7" fill="#5a5c56"/><circle cx="20.6" cy="80" r="3.5" fill="none" stroke="#e0e0e0" stroke-width="1"/>
<text x="43.5" y="29.7" text-anchor="middle" font-size="13.5" font-weight="bold" fill="#b4565a">0</text><text x="87.5" y="29.7" text-anchor="middle" font-size="13.5" font-weight="normal" fill="#b6b6b6">1</text><text x="131.5" y="29.7" text-anchor="middle" font-size="13.5" font-weight="normal" fill="#b6b6b6">2</text><text x="175.5" y="29.7" text-anchor="middle" font-size="13.5" font-weight="normal" fill="#b6b6b6">3</text><text x="219.5" y="29.7" text-anchor="middle" font-size="13.5" font-weight="normal" fill="#b6b6b6">4</text><text x="263.5" y="29.7" text-anchor="middle" font-size="13.5" font-weight="normal" fill="#b6b6b6">5</text><text x="307.5" y="29.7" text-anchor="middle" font-size="13.5" font-weight="normal" fill="#b6b6b6">6</text><text x="351.5" y="29.7" text-anchor="middle" font-size="13.5" font-weight="normal" fill="#b6b6b6">7</text><text x="395.5" y="29.7" text-anchor="middle" font-size="13.5" font-weight="normal" fill="#b6b6b6">8</text><text x="439.5" y="29.7" text-anchor="middle" font-size="13.5" font-weight="normal" fill="#b6b6b6">9</text><text x="484.3" y="29.7" text-anchor="middle" font-size="13.5" font-weight="bold" fill="#b53c46">10</text><text x="527.5" y="29.7" text-anchor="middle" font-size="13.5" font-weight="normal" fill="#b6b6b6">11</text><text x="571.5" y="29.7" text-anchor="middle" font-size="13.5" font-weight="normal" fill="#b6b6b6">12</text><text x="615.5" y="29.7" text-anchor="middle" font-size="13.5" font-weight="normal" fill="#b6b6b6">13</text><text x="659.5" y="29.7" text-anchor="middle" font-size="13.5" font-weight="normal" fill="#b6b6b6">14</text><text x="703.5" y="29.7" text-anchor="middle" font-size="13.5" font-weight="normal" fill="#b6b6b6">15</text><text transform="translate(15.2,94.1) rotate(90) scale(1,1.17)" text-anchor="middle" font-size="13.5" font-weight="normal" fill="#b4b4b4">1</text><text transform="translate(15.2,138.1) rotate(90) scale(1,1.17)" text-anchor="middle" font-size="13.5" font-weight="normal" fill="#b4b4b4">2</text><text transform="translate(15.2,182.1) rotate(90) scale(1,1.17)" text-anchor="middle" font-size="13.5" font-weight="normal" fill="#b4b4b4">3</text><text transform="translate(15.2,226.1) rotate(90) scale(1,1.17)" text-anchor="middle" font-size="13.5" font-weight="normal" fill="#b4b4b4">4</text><text transform="translate(15.2,270.1) rotate(90) scale(1,1.17)" text-anchor="middle" font-size="13.5" font-weight="normal" fill="#b4b4b4">5</text><text transform="translate(15.2,314.1) rotate(90) scale(1,1.17)" text-anchor="middle" font-size="13.5" font-weight="normal" fill="#b4b4b4">6</text><text transform="translate(15.2,358.1) rotate(90) scale(1,1.17)" text-anchor="middle" font-size="13.5" font-weight="normal" fill="#b4b4b4">7</text><text transform="translate(15.2,402.1) rotate(90) scale(1,1.17)" text-anchor="middle" font-size="13.5" font-weight="normal" fill="#b4b4b4">8</text><text transform="translate(15.2,446.1) rotate(90) scale(1,1.17)" text-anchor="middle" font-size="13.5" font-weight="normal" fill="#b4b4b4">9</text><text transform="translate(15.2,490.1) rotate(90) scale(1,1.17)" text-anchor="middle" font-size="13.5" font-weight="bold" fill="#b53c46">10</text><text transform="translate(15.2,534.1) rotate(90) scale(1,1.17)" text-anchor="middle" font-size="13.5" font-weight="normal" fill="#b4b4b4">11</text><text transform="translate(15.2,578.1) rotate(90) scale(1,1.17)" text-anchor="middle" font-size="13.5" font-weight="normal" fill="#b4b4b4">12</text><text transform="translate(15.2,622.1) rotate(90) scale(1,1.17)" text-anchor="middle" font-size="13.5" font-weight="normal" fill="#b4b4b4">13</text><text transform="translate(15.2,666.1) rotate(90) scale(1,1.17)" text-anchor="middle" font-size="13.5" font-weight="normal" fill="#b4b4b4">14</text>
</svg>
</body></html>
